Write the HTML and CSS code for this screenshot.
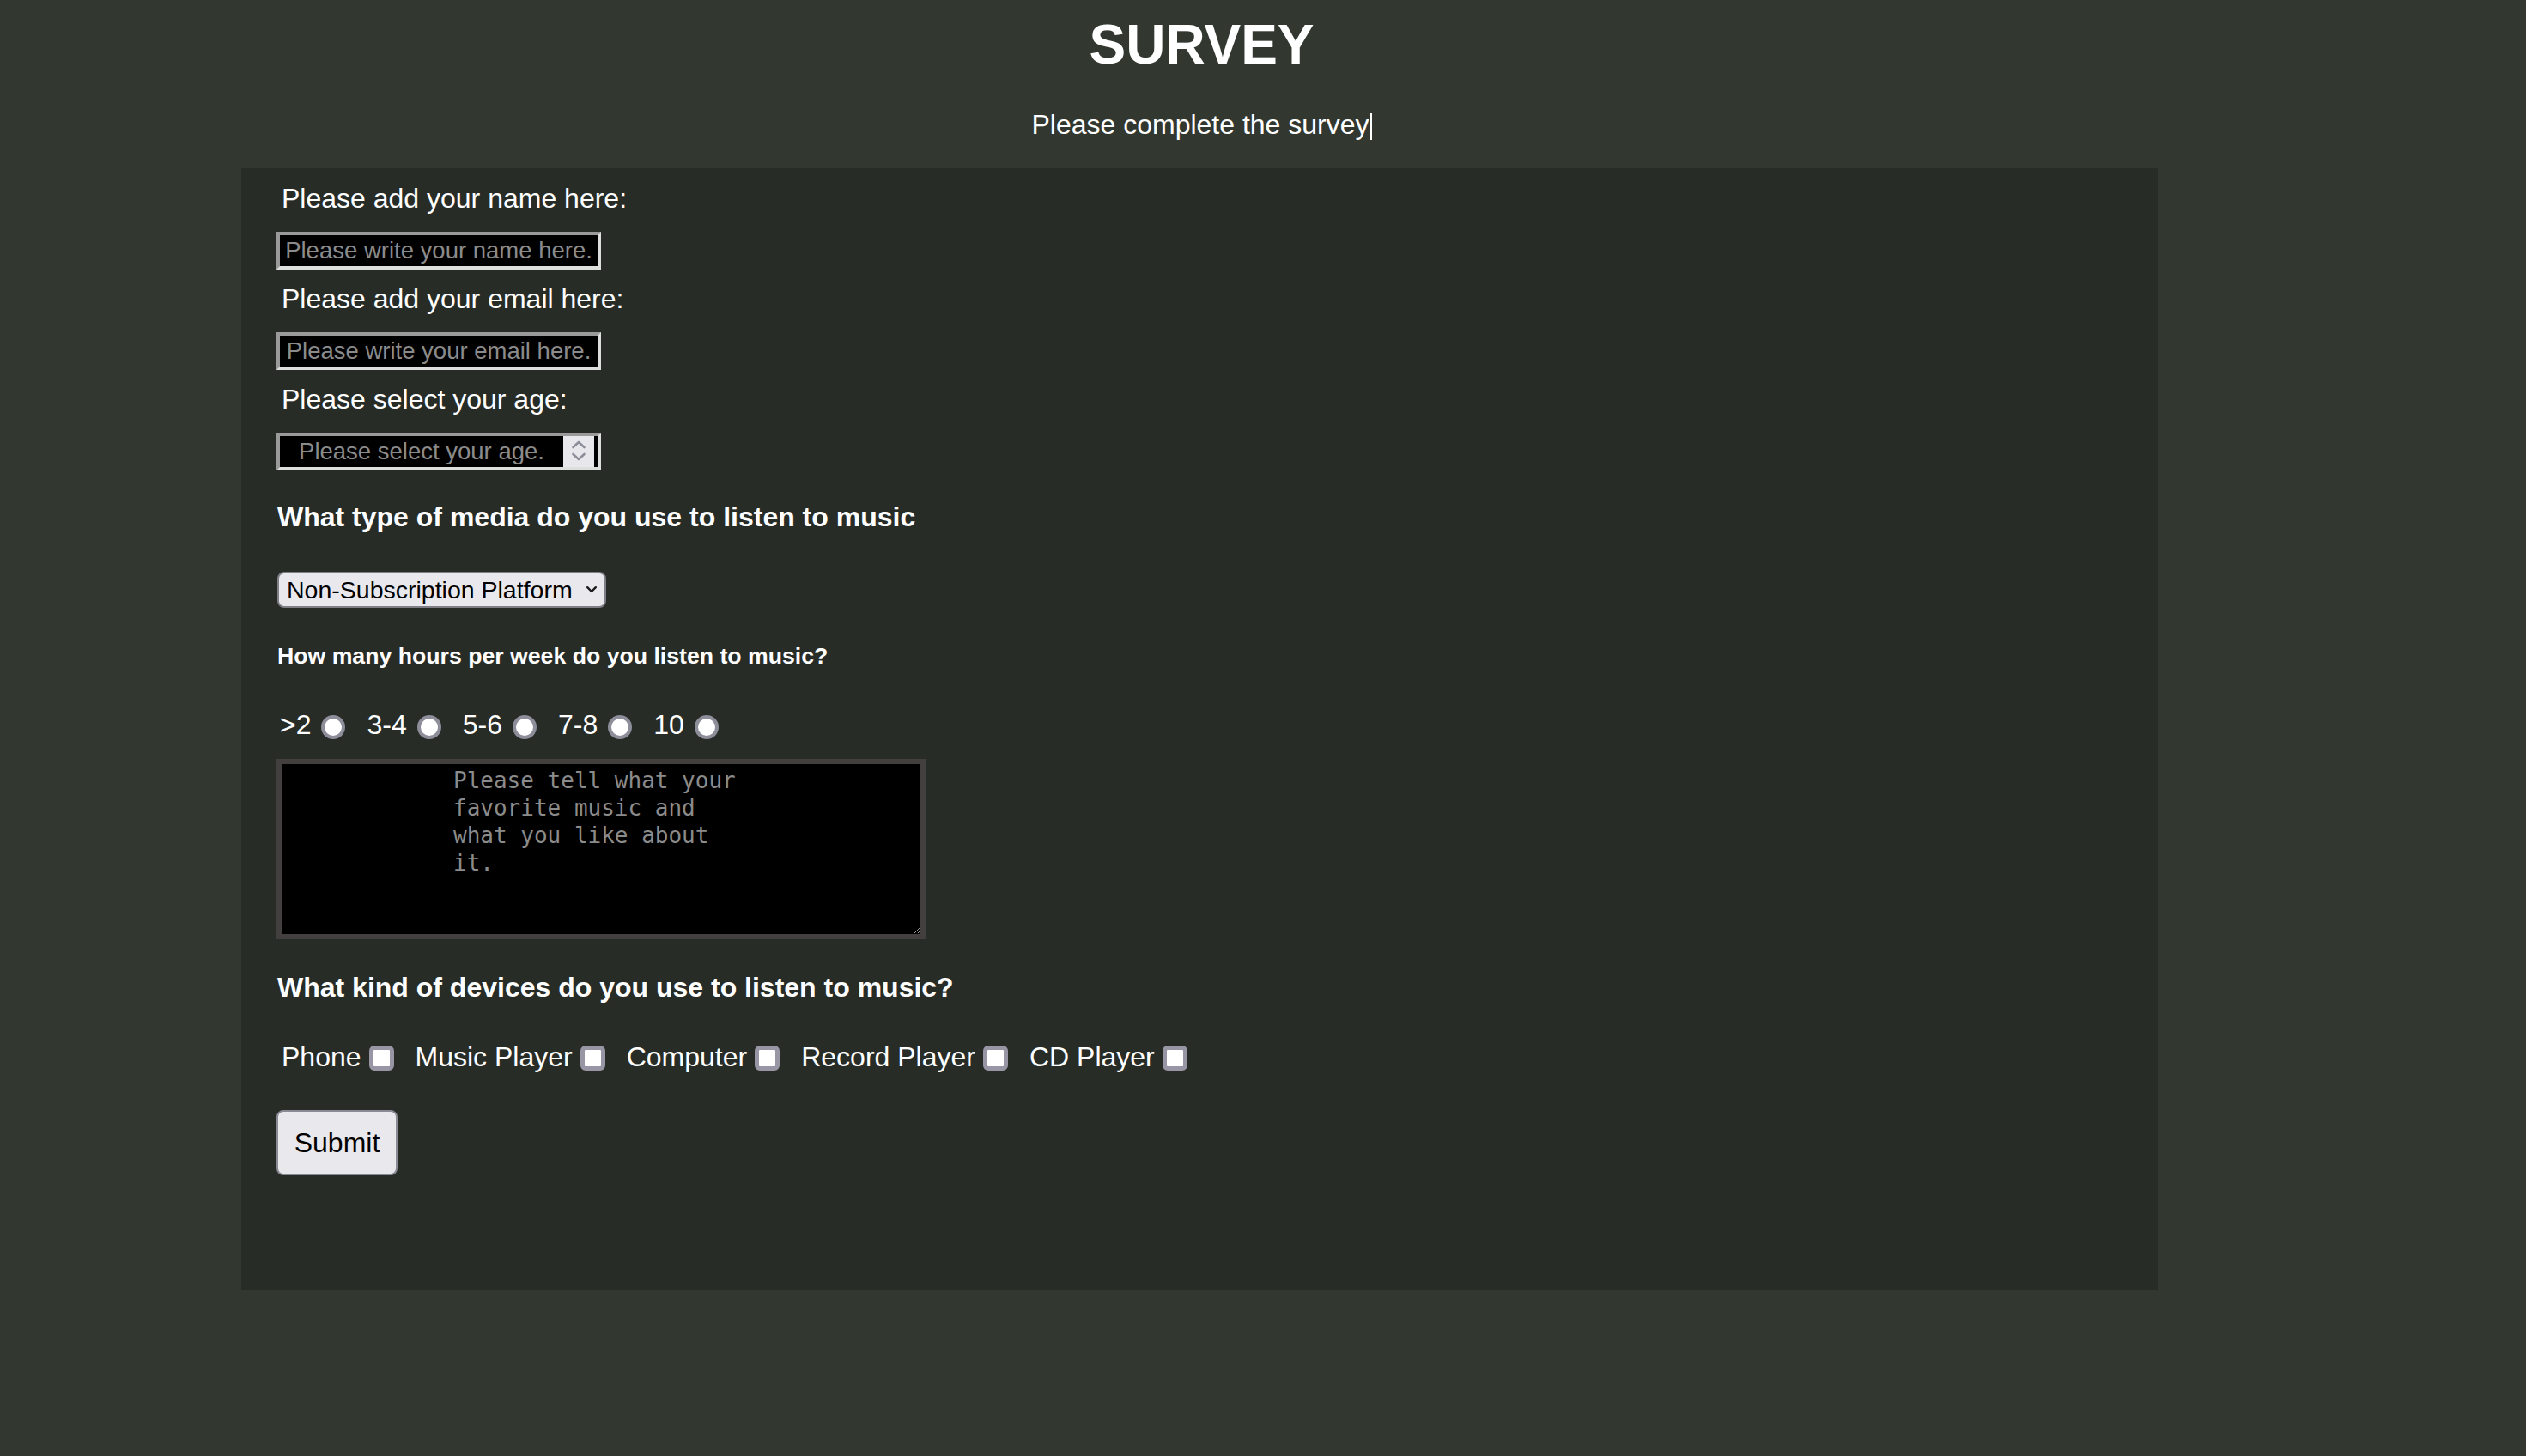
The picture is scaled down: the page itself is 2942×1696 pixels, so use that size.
FILE: index.html
```html
<!DOCTYPE html>
<html lang="en">
<head>
<meta charset="utf-8">
<title>Survey</title>
<link rel="stylesheet" href="styles.css">
</head>
<body>
<div class="page">
  <header class="header">
    <h1 class="title">SURVEY</h1>
    <p class="subtitle">Please complete the survey<span class="caret"></span></p>
  </header>
  <form class="survey">
    <label class="field-label" for="name">Please add your name here:</label>
    <input class="text-input" id="name" type="text" placeholder="Please write your name here.">
    <label class="field-label spaced" for="email">Please add your email here:</label>
    <input class="text-input" id="email" type="email" placeholder="Please write your email here.">
    <label class="field-label spaced" for="age">Please select your age:</label>
    <div class="number-field">
      <input class="number-input" id="age" type="number" placeholder="Please select your age.">
      <span class="spinner">
        <svg width="36" height="36" viewBox="0 0 36 36" aria-hidden="true">
          <polyline points="11.5,13 18,7 24.5,13" fill="none" stroke="#8e8e9a" stroke-width="2.6" stroke-linecap="round" stroke-linejoin="round"/>
          <polyline points="11.5,21 18,27 24.5,21" fill="none" stroke="#8e8e9a" stroke-width="2.6" stroke-linecap="round" stroke-linejoin="round"/>
        </svg>
      </span>
    </div>
    <h4 class="question q-media">What type of media do you use to listen to music</h4>
    <div class="select-wrap">
      <select class="select" aria-label="Media type">
        <option>Non-Subscription Platform</option>
        <option>Subscription Platform</option>
        <option>Radio</option>
      </select>
      <svg class="select-arrow" width="12" height="8" viewBox="0 0 12 8" aria-hidden="true">
        <polyline points="1.2,1.2 6,6 10.8,1.2" fill="none" stroke="#1c1c1c" stroke-width="2.4" stroke-linecap="round" stroke-linejoin="round"/>
      </svg>
    </div>
    <h5 class="question-small">How many hours per week do you listen to music?</h5>
    <div class="choice-row radios">
      <label class="choice">&gt;2<input class="radio" type="radio" name="hours"></label>
      <label class="choice">3-4<input class="radio" type="radio" name="hours"></label>
      <label class="choice">5-6<input class="radio" type="radio" name="hours"></label>
      <label class="choice">7-8<input class="radio" type="radio" name="hours"></label>
      <label class="choice">10<input class="radio" type="radio" name="hours"></label>
    </div>
    <textarea class="comments" placeholder="Please tell what your favorite music and what you like about it."></textarea>
    <h4 class="question q-devices">What kind of devices do you use to listen to music?</h4>
    <div class="choice-row checks">
      <label class="choice">Phone<input class="check" type="checkbox"></label>
      <label class="choice">Music Player<input class="check" type="checkbox"></label>
      <label class="choice">Computer<input class="check" type="checkbox"></label>
      <label class="choice">Record Player<input class="check" type="checkbox"></label>
      <label class="choice">CD Player<input class="check" type="checkbox"></label>
    </div>
    <button class="submit" type="submit">Submit</button>
  </form>
</div>
</body>
</html>
```

FILE: styles.css
```css
html, body {
  margin: 0;
  padding: 0;
}

body {
  background: #323730;
  color: #ffffff;
  font-family: "Liberation Sans", Arial, sans-serif;
  min-height: 1696px;
}

.page {
  margin-left: 281px;
  width: 2232px;
}

.header {
  padding: 16px 0 0 5px;
  text-align: center;
}

.title {
  margin: 0;
  font-size: 64px;
  line-height: 72px;
  font-weight: 700;
}

.subtitle {
  margin: 39px 0 0;
  font-size: 32px;
  line-height: 36px;
}

.caret {
  display: inline-block;
  width: 2px;
  height: 31px;
  margin-left: 1px;
  background: #ffffff;
  vertical-align: -7px;
}

.survey {
  margin-top: 33px;
  padding: 17px 0 134px 41px;
  background: #282c27;
}

.field-label {
  display: block;
  margin: 0 0 0 6px;
  font-size: 32px;
  line-height: 36px;
}

.field-label.spaced {
  margin-top: 16px;
}

.text-input {
  display: block;
  box-sizing: border-box;
  width: 378px;
  height: 44px;
  margin-top: 21px;
  padding: 0 4px;
  border-width: 4px;
  border-style: solid;
  border-color: #9a9a9a #dedede #dedede #9a9a9a;
  background: #000000;
  color: #ffffff;
  font-family: "Liberation Sans", Arial, sans-serif;
  font-size: 27.5px;
  line-height: 32px;
  text-align: center;
  outline: none;
}

.text-input::placeholder,
.number-input::placeholder,
.comments::placeholder {
  color: #8b8b8b;
  opacity: 1;
}

.number-field {
  display: flex;
  box-sizing: border-box;
  width: 378px;
  height: 44px;
  margin-top: 21px;
  padding-right: 4px;
  border-width: 4px;
  border-style: solid;
  border-color: #9a9a9a #dedede #dedede #9a9a9a;
  background: #000000;
}

.number-input {
  flex: 1;
  min-width: 0;
  margin: 0;
  padding: 0;
  border: none;
  background: transparent;
  color: #ffffff;
  font-family: "Liberation Sans", Arial, sans-serif;
  font-size: 27.5px;
  text-align: center;
  outline: none;
  -moz-appearance: textfield;
}

.number-input::-webkit-inner-spin-button,
.number-input::-webkit-outer-spin-button {
  -webkit-appearance: none;
  margin: 0;
}

.spinner {
  display: flex;
  align-items: center;
  justify-content: center;
  width: 36px;
  background: #e8e8ec;
}

.question {
  margin: 0 0 0 1px;
  font-size: 32px;
  line-height: 36px;
  font-weight: 700;
}

.q-media {
  margin-top: 36px;
}

.q-devices {
  margin-top: 38px;
}

.select-wrap {
  display: flex;
  align-items: center;
  margin: 46px 0 0 1px;
}

.select {
  -webkit-appearance: none;
  appearance: none;
  box-sizing: border-box;
  width: 383px;
  height: 42px;
  margin: 0;
  padding: 0 30px 0 9px;
  border: 2px solid #7f7f88;
  border-radius: 8px;
  background: #e9e9ed;
  color: #000000;
  font-family: "Liberation Sans", Arial, sans-serif;
  font-size: 28.5px;
}

.select-arrow {
  margin-left: -23px;
  pointer-events: none;
}

.question-small {
  margin: 40px 0 0 1px;
  font-size: 26.67px;
  line-height: 32px;
  font-weight: 700;
}

.choice-row {
  display: flex;
  align-items: center;
  gap: 25px;
  height: 36px;
  font-size: 32px;
  line-height: 36px;
}

.radios {
  margin: 46px 0 0 4px;
}

.checks {
  margin: 45px 0 0 6px;
}

.choice {
  display: inline-flex;
  align-items: center;
}

.radio {
  -webkit-appearance: none;
  appearance: none;
  box-sizing: border-box;
  width: 28px;
  height: 28px;
  margin: 6px 0 0 12px;
  border: 4px solid #8e8e9b;
  border-radius: 50%;
  background: #ffffff;
}

.check {
  -webkit-appearance: none;
  appearance: none;
  box-sizing: border-box;
  width: 29px;
  height: 29px;
  margin: 2px 0 0 9px;
  border: 5px solid #9896a4;
  border-radius: 6px;
  background: #ffffff;
}

.comments {
  display: block;
  box-sizing: border-box;
  width: 756px;
  height: 210px;
  margin-top: 22px;
  padding: 3px 210px 0 200px;
  border: 6px solid #433f3e;
  background: #000000;
  color: #ffffff;
  font-family: "DejaVu Sans Mono", "Liberation Mono", monospace;
  font-size: 26px;
  line-height: 32px;
  outline: none;
}

.submit {
  display: block;
  box-sizing: border-box;
  width: 141px;
  height: 76px;
  margin-top: 44px;
  padding: 0;
  border: 2px solid #8a8a94;
  border-radius: 8px;
  background: #e9e9ed;
  color: #000000;
  font-family: "Liberation Sans", Arial, sans-serif;
  font-size: 32px;
}
```
